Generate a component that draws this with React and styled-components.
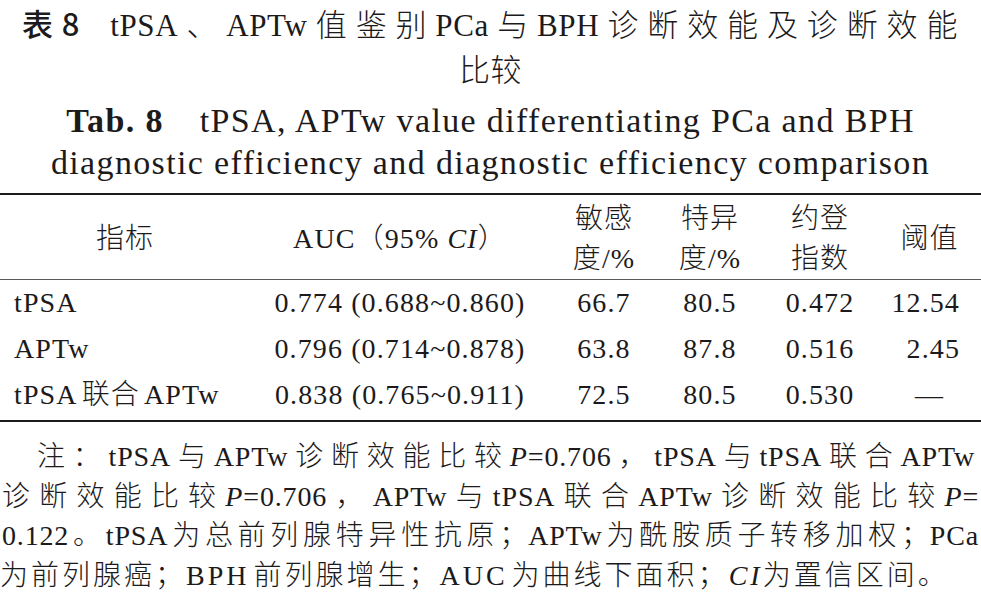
import React from "react";
import styled, { createGlobalStyle } from "styled-components";

const GlobalStyle = createGlobalStyle`
  html, body {
    margin: 0;
    padding: 0;
    background: #ffffff;
  }
  body {
    font-family: "Liberation Serif", "Noto Sans CJK SC", serif;
    color: #1c1a1b;
  }
`;

const Page = styled.div`
  width: 981px;
  height: 592px;
  overflow: hidden;
  background: #fff;
`;

const CnCaption = styled.div`
  font-size: 31px;
  font-weight: 300;
  line-height: 45px;
  letter-spacing: 0.02em;
`;

const JustLine = styled.div`
  padding: 0 ${(p) => p.$right ?? 23}px 0 ${(p) => p.$left ?? 22}px;
  text-align: justify;
  text-align-last: justify;
  text-justify: inter-character;
  white-space: nowrap;
`;

const CenterLine = styled.div`
  text-align: center;
  white-space: nowrap;
`;

const TableNo = styled.span`
  font-family: "Noto Sans CJK SC", sans-serif;
  font-weight: 500;
  margin-right: 30px;
`;

const EnCaption = styled.div`
  margin-top: 7px;
  font-size: 34px;
  line-height: 42px;
  letter-spacing: 0.04em;
`;

const TabNo = styled.b`
  font-weight: 700;
  margin-right: 36px;
`;

const Table = styled.table`
  margin-top: 9px;
  width: 981px;
  border-collapse: collapse;
  table-layout: fixed;
  border-top: 2px solid #1c1a1b;
  border-bottom: 2px solid #1c1a1b;
  font-size: 28px;
  font-weight: 300;
  letter-spacing: 0.04em;
`;

const HeadRow = styled.tr`
  border-bottom: 1.5px solid #5a5a5a;
`;

const Th = styled.th`
  font-weight: 300;
  padding: 4px 0 0;
  line-height: 40px;
  text-align: center;
  vertical-align: middle;
  white-space: nowrap;
`;

const Td = styled.td`
  padding: 0 ${(p) => (p.$align === "right" ? "21px" : "0")} ${(p) => (p.$last ? "2px" : "0")} ${(p) => (p.$align === "left" ? "14px" : "0")};
  line-height: 46px;
  text-align: ${(p) => p.$align || "center"};
  white-space: nowrap;
`;

const Gap = styled.span`
  margin-left: ${(p) => p.$w || 6}px;
`;

const Note = styled.div`
  margin-top: 15px;
  font-size: 28px;
  font-weight: 300;
  line-height: 39.5px;
  letter-spacing: 0.03em;
`;

const NoteLast = styled.div`
  white-space: nowrap;
  letter-spacing: 3px;
`;

const rows = [
  { name: <>tPSA</>, auc: "0.774 (0.688~0.860)", sens: "66.7", spec: "80.5", youden: "0.472", cut: "12.54" },
  { name: <>APTw</>, auc: "0.796 (0.714~0.878)", sens: "63.8", spec: "87.8", youden: "0.516", cut: "2.45" },
  {
    name: (
      <>
        tPSA<Gap $w={4} />联合<Gap $w={4} />APTw
      </>
    ),
    auc: "0.838 (0.765~0.911)",
    sens: "72.5",
    spec: "80.5",
    youden: "0.530",
    cut: null,
  },
];

export default function App() {
  return (
    <Page>
      <GlobalStyle />
      <CnCaption>
        <JustLine>
          <TableNo>表8</TableNo>tPSA、APTw值鉴别PCa与BPH诊断效能及诊断效能
        </JustLine>
        <CenterLine>比较</CenterLine>
      </CnCaption>
      <EnCaption>
        <CenterLine>
          <TabNo>Tab. 8</TabNo>tPSA, APTw value differentiating PCa and BPH
        </CenterLine>
        <CenterLine>diagnostic efficiency and diagnostic efficiency comparison</CenterLine>
      </EnCaption>
      <Table>
        <colgroup>
          <col style={{ width: 250 }} />
          <col style={{ width: 300 }} />
          <col style={{ width: 108 }} />
          <col style={{ width: 104 }} />
          <col style={{ width: 116 }} />
          <col style={{ width: 103 }} />
        </colgroup>
        <thead>
          <HeadRow>
            <Th>指标</Th>
            <Th>
              AUC（95% <i>CI</i>）
            </Th>
            <Th>
              敏感
              <br />
              度/%
            </Th>
            <Th>
              特异
              <br />
              度/%
            </Th>
            <Th>
              约登
              <br />
              指数
            </Th>
            <Th>阈值</Th>
          </HeadRow>
        </thead>
        <tbody>
          {rows.map((r, i) => {
            const last = i === rows.length - 1;
            return (
              <tr key={i}>
                <Td $align="left" $last={last}>{r.name}</Td>
                <Td $last={last}>{r.auc}</Td>
                <Td $last={last}>{r.sens}</Td>
                <Td $last={last}>{r.spec}</Td>
                <Td $last={last}>{r.youden}</Td>
                {r.cut ? (
                  <Td $align="right" $last={last}>{r.cut}</Td>
                ) : (
                  <Td $last={last}>—</Td>
                )}
              </tr>
            );
          })}
        </tbody>
      </Table>
      <Note>
        <JustLine $left={37} $right={6}>
          注：tPSA与APTw诊断效能比较<i>P</i>=0.706，tPSA与tPSA联合APTw
        </JustLine>
        <JustLine $left={2} $right={2}>
          诊断效能比较<i>P</i>=0.706，APTw与tPSA联合APTw诊断效能比较<i>P</i>=
        </JustLine>
        <JustLine $left={2} $right={2}>
          0.122。tPSA为总前列腺特异性抗原；APTw为酰胺质子转移加权；PCa
        </JustLine>
        <NoteLast>
          为前列腺癌；BPH<Gap $w={4} />前列腺增生；AUC<Gap $w={4} />为曲线下面积；<i>CI</i>为置信区间。
        </NoteLast>
      </Note>
    </Page>
  );
}
